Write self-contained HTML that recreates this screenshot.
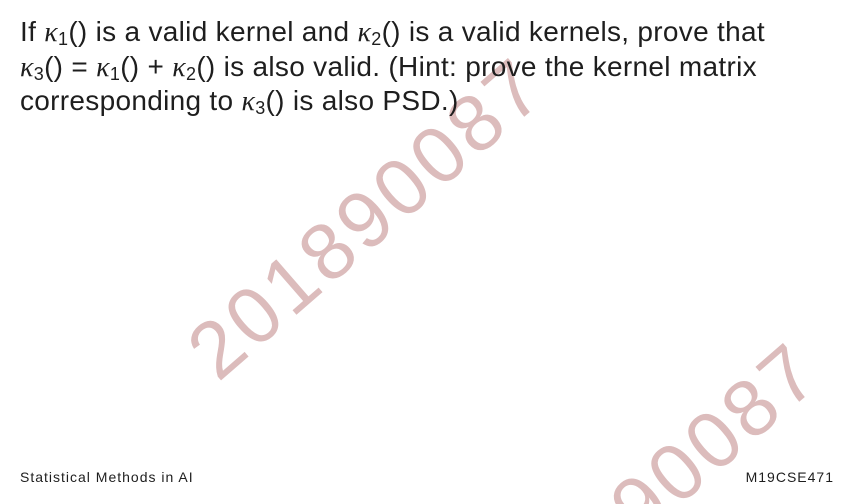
<!DOCTYPE html>
<html><head><style>
body{margin:0;width:855px;height:504px;background:#fff;overflow:hidden;position:relative;font-family:"Liberation Sans",sans-serif;color:#1e1e1e}
.t{position:absolute;left:20px;top:15px;font-size:28px;letter-spacing:0.3px;line-height:33.5px;white-space:nowrap;z-index:2}
.k{font-family:"Liberation Serif",serif;font-style:italic}
sub{font-size:18px;vertical-align:-4px;line-height:0}
.f{position:absolute;top:469px;font-size:14px;letter-spacing:1px;z-index:2}
svg{position:absolute;left:0;top:0}
</style></head><body>
<svg width="855" height="504"><g font-family="Liberation Sans, sans-serif" font-size="80" fill="#dcbcbc">
<text x="218" y="383" transform="rotate(-41 218 383)" textLength="436">201890087</text>
<text x="493" y="668" transform="rotate(-41 493 668)" textLength="436">201890087</text>
</g></svg>
<div class="t">If <span class="k">κ</span><sub>1</sub>() is a valid kernel and <span class="k">κ</span><sub>2</sub>() is a valid kernels, prove that<br><span class="k">κ</span><sub>3</sub>() = <span class="k">κ</span><sub>1</sub>() + <span class="k">κ</span><sub>2</sub>() is also valid. (Hint: prove the kernel matrix<br>corresponding to <span class="k">κ</span><sub>3</sub>() is also PSD.)</div>
<div class="f" style="left:20px">Statistical Methods in AI</div>
<div class="f" style="right:21px">M19CSE471</div>
</body></html>
